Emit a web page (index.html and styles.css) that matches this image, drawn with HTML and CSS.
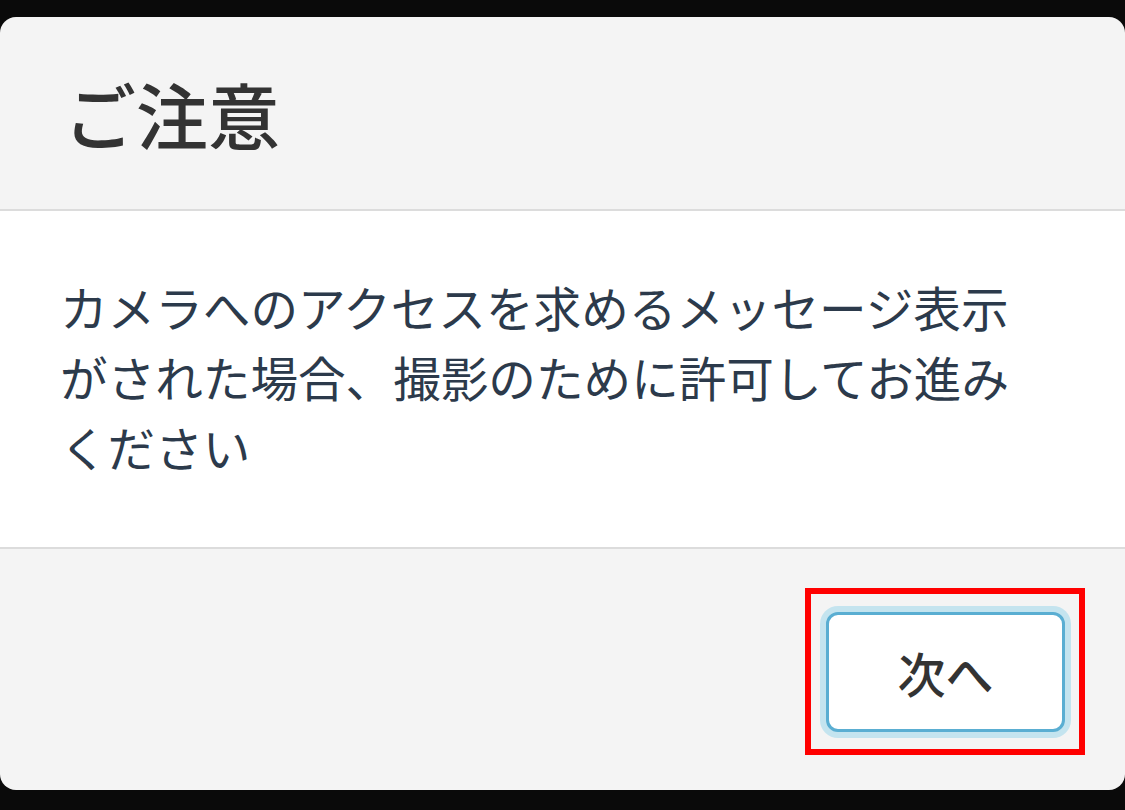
FILE: index.html
```html
<!DOCTYPE html>
<html lang="ja">
<head>
  <meta charset="utf-8">
  <title>ご注意</title>
  <link rel="stylesheet" href="styles.css">
</head>
<body>
  <div class="modal">
    <div class="modal-header">
      <h1 class="modal-title">ご注意</h1>
    </div>
    <div class="modal-body">
      <p>カメラへのアクセスを求めるメッセージ表示がされた場合、撮影のために許可してお進みください</p>
    </div>
    <div class="modal-footer">
      <div class="highlight">
        <button class="btn-next">次へ</button>
      </div>
    </div>
  </div>
</body>
</html>
```

FILE: styles.css
```css
html, body {
  margin: 0;
  height: 100%;
}
body {
  background-color: #0a0a0a;
  font-family: "Noto Sans CJK JP", "Noto Sans", sans-serif;
  padding-top: 17px;
  box-sizing: border-box;
}
.modal {
  height: 773px;
  background-color: #f4f4f4;
  border-radius: 16px;
  overflow: hidden;
  display: flex;
  flex-direction: column;
}
.modal-header {
  height: 192px;
  flex-shrink: 0;
  display: flex;
  align-items: center;
  padding-left: 64px;
  border-bottom: 2px solid #dcdcdc;
}
.modal-title {
  margin: 0;
  font-size: 72px;
  font-weight: 500;
  color: #333;
  line-height: 1;
}
.modal-body {
  background-color: #fff;
  height: 338px;
  flex-shrink: 0;
  padding: 61px 80px 0 60px;
  box-sizing: border-box;
  border-bottom: 2px solid #dcdcdc;
}
.modal-body p {
  margin: 0;
  font-size: 47.6px;
  line-height: 70px;
  color: #2c3a4b;
}
.modal-footer {
  flex: 1;
  display: flex;
  justify-content: flex-end;
  align-items: center;
  padding-right: 40px;
}
.highlight {
  border: 6px solid #ff0000;
  padding: 18px 14px 17px 15px;
  margin-top: 3px;
}
.btn-next {
  display: block;
  width: 239px;
  height: 120px;
  background-color: #fff;
  border: 3px solid #5aaed2;
  border-radius: 12px;
  box-shadow: 0 0 0 6px #c4e4ef;
  font-family: inherit;
  font-size: 48px;
  font-weight: 500;
  color: #333;
  cursor: pointer;
}
```
